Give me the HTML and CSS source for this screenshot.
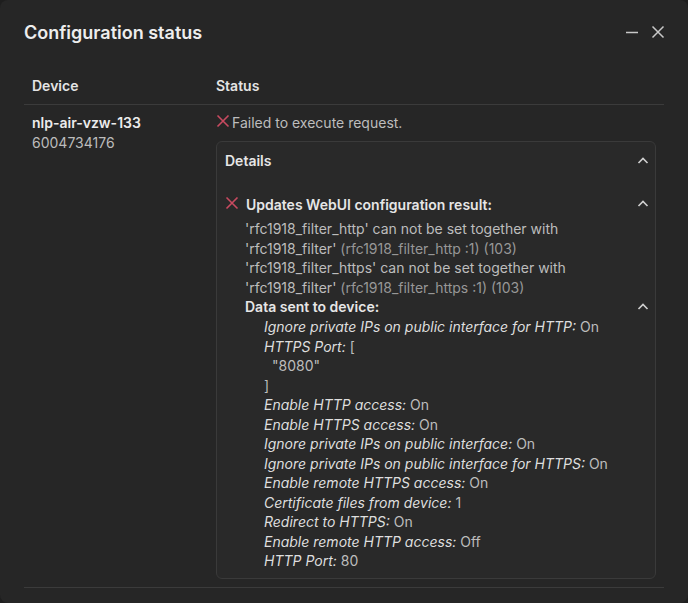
FILE: index.html
```html
<!DOCTYPE html>
<html>
<head>
<meta charset="utf-8">
<link rel="stylesheet" href="styles.css">
</head>
<body>
<div class="dialog">
  <div class="title-row">
    <h1 class="title">Configuration status</h1>
    <div class="win-actions">
      <svg class="win-icon" width="16" height="16" viewBox="0 0 16 16"><path d="M2 8.5h12" stroke="#c8c8c8" stroke-width="1.6" fill="none"/></svg>
      <svg class="win-icon" width="16" height="16" viewBox="0 0 16 16"><path d="M2.5 2.5l11 11M13.5 2.5l-11 11" stroke="#c8c8c8" stroke-width="1.5" fill="none"/></svg>
    </div>
  </div>

  <div class="table">
    <div class="thead">
      <div class="col-device th">Device</div>
      <div class="col-status th">Status</div>
    </div>
    <div class="trow">
      <div class="col-device">
        <div class="device-name">nlp-air-vzw-133</div>
        <div class="device-id">6004734176</div>
      </div>
      <div class="col-status">
        <div class="status-line">
          <svg class="x-icon" width="14" height="14" viewBox="0 0 14 14"><path d="M1.5 1.5l11 11M12.5 1.5l-11 11" stroke="#c84a60" stroke-width="1.6" fill="none"/></svg>
          <span class="status-text">Failed to execute request.</span>
        </div>
        <div class="card">
          <div class="card-head">
            <span class="card-title">Details</span>
            <svg class="chev" width="14" height="14" viewBox="0 0 14 14"><path d="M2.5 9l4.5-4.5 4.5 4.5" stroke="#cfcfcf" stroke-width="1.6" fill="none"/></svg>
          </div>
          <div class="card-body">
            <div class="result-head">
              <svg class="x-icon" width="14" height="14" viewBox="0 0 14 14"><path d="M1.5 1.5l11 11M12.5 1.5l-11 11" stroke="#c84a60" stroke-width="1.6" fill="none"/></svg>
              <span class="result-title">Updates WebUI configuration result:</span>
              <svg class="chev chev-up" width="14" height="14" viewBox="0 0 14 14"><path d="M2.5 9l4.5-4.5 4.5 4.5" stroke="#cfcfcf" stroke-width="1.6" fill="none"/></svg>
            </div>
            <div class="result-content">
              <div class="messages">
                <div class="msg">
                  <div class="msg-line">'rfc1918_filter_http' can not be set together with</div>
                  <div class="msg-line">'rfc1918_filter' <span class="dim">(rfc1918_filter_http :1) (103)</span></div>
                </div>
                <div class="msg">
                  <div class="msg-line">'rfc1918_filter_https' can not be set together with</div>
                  <div class="msg-line">'rfc1918_filter' <span class="dim">(rfc1918_filter_https :1) (103)</span></div>
                </div>
              </div>
              <div class="data-head">
                <span class="data-title">Data sent to device:</span>
                <svg class="chev" width="14" height="14" viewBox="0 0 14 14"><path d="M2.5 9l4.5-4.5 4.5 4.5" stroke="#cfcfcf" stroke-width="1.6" fill="none"/></svg>
              </div>
              <div class="data-list">
                <div class="item"><em>Ignore private IPs on public interface for HTTP:</em> On</div>
                <div class="item"><em>HTTPS Port:</em> [</div>
                <div class="item json">"8080"</div>
                <div class="item">]</div>
                <div class="item"><em>Enable HTTP access:</em> On</div>
                <div class="item"><em>Enable HTTPS access:</em> On</div>
                <div class="item"><em>Ignore private IPs on public interface:</em> On</div>
                <div class="item"><em>Ignore private IPs on public interface for HTTPS:</em> On</div>
                <div class="item"><em>Enable remote HTTPS access:</em> On</div>
                <div class="item"><em>Certificate files from device:</em> 1</div>
                <div class="item"><em>Redirect to HTTPS:</em> On</div>
                <div class="item"><em>Enable remote HTTP access:</em> Off</div>
                <div class="item"><em>HTTP Port:</em> 80</div>
              </div>
            </div>
          </div>
        </div>
      </div>
    </div>
  </div>
</div>
</body>
</html>
```

FILE: styles.css
```css
* { box-sizing: border-box; }
html, body {
  margin: 0;
  padding: 0;
  background: #1e1e1e;
}
body {
  font-family: Inter, "Noto Sans", sans-serif;
  color: #bdbdbd;
  font-size: 14px;
}
.dialog {
  width: 688px;
  height: 603px;
  background: #262626;
  border-radius: 8px;
  padding: 21px 24px 0 24px;
  overflow: hidden;
}
.title-row {
  display: flex;
  align-items: center;
  justify-content: space-between;
  height: 24px;
}
.title {
  margin: 0;
  font-size: 18px;
  font-weight: 600;
  line-height: 24px;
  color: #ededed;
}
.win-actions {
  display: flex;
  gap: 10px;
  align-items: center;
  margin-right: -2px;
  margin-top: -3px;
}
.win-icon { display: block; }
.table {
  margin-top: 23px;
}
.thead, .trow {
  display: flex;
  border-bottom: 1px solid #3b3b3b;
}
.col-device {
  width: 184px;
  flex: none;
  padding: 8px;
}
.col-status {
  flex: 1;
  padding: 8px 8px 8px 8px;
  min-width: 0;
}
.th {
  font-size: 14px;
  font-weight: 600;
  color: #e4e4e4;
  line-height: 20px;
}
.device-name {
  font-size: 14px;
  font-weight: 600;
  color: #ececec;
  line-height: 20px;
}
.device-id {
  line-height: 20px;
  color: #bcbcbc;
}
.status-line {
  display: flex;
  align-items: center;
  line-height: 20px;
  height: 20px;
  gap: 2px;
}
.status-line .x-icon { margin-top: -4px; }
.x-icon { display: block; flex: none; }
.card {
  margin-top: 8px;
  border: 1px solid #3a3a3a;
  border-radius: 6px;
  background: #292929;
  padding: 8px 5px 7px 8px;
}
.card-head, .result-head, .data-head {
  display: flex;
  align-items: center;
}
.card-head { padding-top: 1px; }
.card-title, .result-title, .data-title {
  flex: 1;
  font-size: 14px;
  font-weight: 600;
  color: #e6e6e6;
  line-height: 20px;
}
.chev { display: block; flex: none; }
.chev-up { margin-top: -3px; }
.card-body {
  padding-top: 24px;
}
.result-head { gap: 7px; }
.result-head .x-icon { margin-top: -4px; }
.result-content {
  padding-left: 20px;
  padding-top: 4px;
}
.msg-line {
  line-height: 19.5px;
  color: #bdbdbd;
  white-space: nowrap;
}
.dim { color: #979797; }
.data-head { height: 20px; }
.data-list {
  padding-left: 19px;
}
.item {
  line-height: 19.5px;
  color: #bdbdbd;
}
.item em {
  font-style: italic;
  color: #dedede;
}
.item.json { padding-left: 8px; }
```
